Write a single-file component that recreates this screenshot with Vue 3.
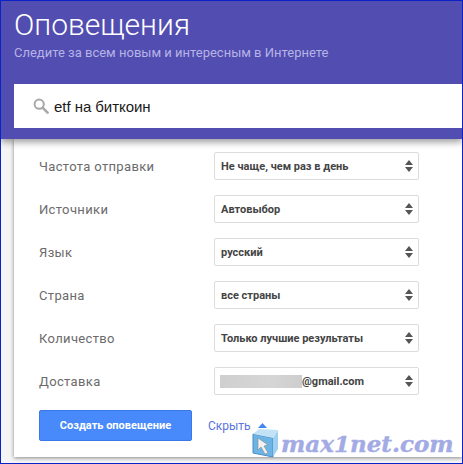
<script setup>
const rows = [
  { label: 'Частота отправки', value: 'Не чаще, чем раз в день' },
  { label: 'Источники', value: 'Автовыбор' },
  { label: 'Язык', value: 'русский' },
  { label: 'Страна', value: 'все страны' },
  { label: 'Количество', value: 'Только лучшие результаты' },
  { label: 'Доставка', value: '@gmail.com', masked: true },
]
</script>

<template>
  <div class="frame">
    <header class="head">
      <h1 class="title">Оповещения</h1>
      <p class="sub">Следите за всем новым и интересным в Интернете</p>
      <div class="search">
        <svg class="mag" width="16" height="16" viewBox="0 0 16 16">
          <circle cx="6.2" cy="6.2" r="4.6" fill="none" stroke="#a8a8a8" stroke-width="2" />
          <path d="M9.8 9.8 L14.6 14.6" stroke="#a8a8a8" stroke-width="2.6" stroke-linecap="round" />
        </svg>
        <span class="query">etf на биткоин</span>
      </div>
    </header>
    <main class="card">
      <div v-for="r in rows" :key="r.label" class="row">
        <span class="label">{{ r.label }}</span>
        <div class="select" :class="{ masked: r.masked }">
          <span v-if="r.masked" class="mask"></span>
          <span class="val">{{ r.value }}</span>
          <svg class="arrows" width="8" height="12" viewBox="0 0 8 12">
            <path d="M4 0 L8 5 H0 Z M0 7 H8 L4 12 Z" fill="#555" />
          </svg>
        </div>
      </div>
      <div class="actions">
        <button class="create">Создать оповещение</button>
        <span class="hide">Скрыть</span>
        <svg class="up" width="9" height="5" viewBox="0 0 9 5"><path d="M4.5 0 L9 5 H0 Z" fill="#4285f4" /></svg>
      </div>
    </main>
    <div class="mark">
      <svg width="27" height="29" viewBox="0 0 27 29">
        <path d="M1 5 L21 9 V28 L1 24 Z" fill="#6db4e6" stroke="#4a8cc4" />
        <path d="M21 9 L26 1 V20 L21 28 Z" fill="#9fd0ef" />
        <path d="M1 5 L21 9 L26 1 L7 0 Z" fill="#c3e2f5" />
        <path d="M6 9 L16 16 L12 17 L16 24 L13 25 L9 18 L6 21 Z" fill="#f2f2f2" stroke="#888" stroke-width=".6" />
      </svg>
      <span class="brand">max1net.com</span>
    </div>
  </div>
</template>

<style>
html, body { margin: 0; background: #fff; }
</style>

<style scoped>
.frame {
  position: relative;
  width: 463px;
  height: 464px;
  box-sizing: border-box;
  border: 1px solid #0a22c8;
  background: #f5f5f5;
  overflow: hidden;
  font-family: Roboto, "Liberation Sans", sans-serif;
  display: flex;
  flex-direction: column;
}
.head {
  position: relative;
  z-index: 1;
  height: 138px;
  flex: none;
  box-sizing: border-box;
  background: #524db0;
  padding: 6px 0 0 13px;
  box-shadow: 0 3px 7px rgba(0, 0, 0, .4);
}
.title {
  margin: 0;
  font-size: 30px;
  line-height: 36px;
  font-weight: 300;
  color: #fff;
}
.sub {
  margin: 0;
  font-size: 13px;
  line-height: 20px;
  color: #b6b3e6;
}
.search {
  margin-top: 21px;
  height: 44px;
  background: #fff;
  display: flex;
  align-items: center;
  padding-left: 19px;
  gap: 5px;
}
.query {
  font-family: "Liberation Sans", sans-serif;
  font-size: 15px;
  letter-spacing: -.05px;
  color: #1a1a1a;
}
.card {
  flex: 1;
  margin: 0 0 6px 13px;
  background: #fff;
  box-shadow: 0 1px 4px rgba(0, 0, 0, .45);
  padding: 13px 0 0 25px;
  display: flex;
  flex-direction: column;
  gap: 15px;
}
.row {
  display: flex;
  align-items: center;
  height: 28px;
}
.label {
  width: 175px;
  font-size: 13px;
  letter-spacing: .35px;
  color: #6b6b6b;
}
.select {
  width: 205px;
  height: 28px;
  box-sizing: border-box;
  border: 1px solid #dcdcdc;
  border-radius: 2px;
  display: flex;
  align-items: center;
  padding: 0 5px 0 6px;
  font-size: 11px;
  font-weight: 700;
  color: #444;
}
.select.masked { padding-left: 5px; }
.val { flex: 1; }
.mask {
  width: 82px;
  height: 13px;
  flex: none;
  background: linear-gradient(90deg, #cfcfcf, #d6d6d6 60%, #cdcdcd);
}
.arrows { flex: none; }
.actions {
  display: flex;
  align-items: center;
  height: 31px;
}
.create {
  width: 153px;
  height: 31px;
  border: 1px solid #3b78e7;
  border-radius: 2px;
  background: #4889fb;
  color: #fff;
  font-family: inherit;
  font-size: 11px;
  font-weight: 700;
  padding: 0;
}
.hide {
  margin-left: 16px;
  font-size: 12px;
  color: #5a73e0;
}
.up { margin-left: 7px; }
.mark {
  position: absolute;
  z-index: 2;
  left: 251px;
  top: 428px;
  display: flex;
  align-items: center;
  gap: 2px;
}
.brand {
  font-family: "DejaVu Serif", serif;
  font-size: 23px;
  line-height: 26px;
  font-weight: 700;
  font-style: italic;
  color: #a3abe4;
  -webkit-text-stroke: .4px #a3abe4;
}
</style>
